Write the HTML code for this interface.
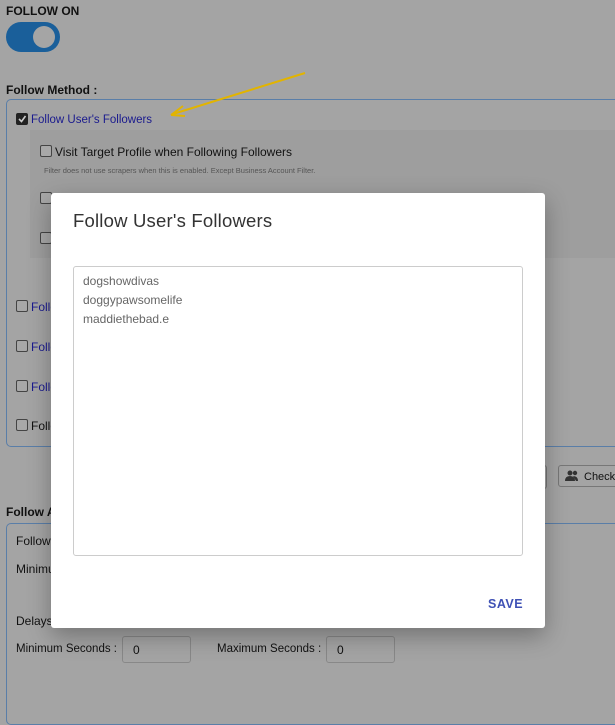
<!DOCTYPE html>
<html><head><style>
body{margin:0;width:615px;height:689px;overflow:hidden;background:#a4a4a4;font-family:"Liberation Sans",sans-serif;color:#111;position:relative}
.a{position:absolute;white-space:nowrap}
.cb{position:absolute;width:10px;height:10px;border:1px solid #444;border-radius:2px;background:#a8a8a8}
.blue{color:#1a1a8e}
.inp{position:absolute;border:1px solid #888;border-radius:3px;height:27px;font-size:12px;line-height:27px;padding-left:10px;box-sizing:border-box}
</style></head><body>
<div class="a" style="left:6px;top:4px;font-size:12px;font-weight:bold">FOLLOW ON</div>
<div class="a" style="left:6px;top:22px;width:54px;height:30px;border-radius:15px;background:#1a5f9a"></div>
<div class="a" style="left:33px;top:26px;width:22px;height:22px;border-radius:50%;background:#a5a5a5"></div>
<div class="a" style="left:6px;top:83px;font-size:12px;font-weight:bold">Follow Method :</div>
<div class="a" style="left:6px;top:99px;width:640px;height:346px;border:1px solid #5a7ea8;border-radius:5px"></div>
<svg class="a" style="left:165px;top:70px" width="145" height="50"><path d="M140 3 L8 44" stroke="#e2b400" stroke-width="2"/><path d="M6 45 L18 36 M6 45 L20 46" stroke="#e2b400" stroke-width="2"/></svg>
<div class="cb" style="left:16px;top:113px;background:#222;border-color:#222"></div>
<svg class="a" style="left:17px;top:114px" width="10" height="10"><path d="M2 5 L4.5 7.5 L8.5 2" stroke="#ccc" stroke-width="1.6" fill="none"/></svg>
<div class="a blue" style="left:31px;top:114px;font-size:11.5px">Follow User's Followers</div>
<div class="a" style="left:30px;top:130px;width:600px;height:128px;background:#9e9e9e"></div>
<div class="cb" style="left:40px;top:145px"></div>
<div class="a" style="left:55px;top:145px;font-size:12px">Visit Target Profile when Following Followers</div>
<div class="a" style="left:44px;top:166px;font-size:7.5px;color:#555">Filter does not use scrapers when this is enabled. Except Business Account Filter.</div>
<div class="cb" style="left:40px;top:192px"></div><div class="cb" style="left:40px;top:232px"></div>
<div class="cb" style="left:16px;top:300px"></div><div class="a blue" style="left:31px;top:300px;font-size:12px">Follow</div>
<div class="cb" style="left:16px;top:340px"></div><div class="a blue" style="left:31px;top:340px;font-size:12px">Follow</div>
<div class="cb" style="left:16px;top:380px"></div><div class="a blue" style="left:31px;top:380px;font-size:12px">Follow</div>
<div class="cb" style="left:16px;top:419px"></div><div class="a" style="left:31px;top:419px;font-size:12px">Follow</div>
<div class="a" style="left:520px;top:465px;width:25px;height:22px;border:1px solid #777;border-radius:3px"></div>
<div class="a" style="left:558px;top:465px;width:70px;height:22px;border:1px solid #777;border-radius:3px;font-size:11px;line-height:22px;padding-left:25px;box-sizing:border-box">Check</div>
<svg class="a" style="left:565px;top:470px" width="14" height="12"><circle cx="5" cy="3" r="2.5" fill="#333"/><path d="M0 11 Q0 6 5 6 Q10 6 10 11Z" fill="#333"/><circle cx="10" cy="3" r="2.2" fill="#333"/><path d="M8 6 Q13 6 13 11 L11 11Z" fill="#333"/></svg>
<div class="a" style="left:6px;top:505px;font-size:12px;font-weight:bold">Follow A</div>
<div class="a" style="left:6px;top:523px;width:640px;height:200px;border:1px solid #5a7ea8;border-radius:5px"></div>
<div class="a" style="left:16px;top:534px;font-size:12px">Follows</div>
<div class="a" style="left:16px;top:562px;font-size:12px">Minimu</div>
<div class="a" style="left:16px;top:614px;font-size:12px">Delays</div>
<div class="a" style="left:16px;top:643px;font-size:11.5px">Minimum Seconds :</div>
<div class="inp" style="left:122px;top:636px;width:69px">0</div>
<div class="a" style="left:217px;top:643px;font-size:11.5px">Maximum Seconds :</div>
<div class="inp" style="left:326px;top:636px;width:69px">0</div>
<div class="a" style="left:51px;top:193px;width:494px;height:435px;background:#fff;border-radius:3px;box-shadow:0 8px 24px rgba(0,0,0,.3)"></div>
<div class="a" style="left:73px;top:210px;font-size:18.5px;color:#333;letter-spacing:0.2px">Follow User's Followers</div>
<div class="a" style="left:73px;top:266px;width:450px;height:290px;border:1px solid #ccc;border-radius:3px;box-sizing:border-box"></div>
<div class="a" style="left:83px;top:272px;font-size:12px;color:#666;line-height:19px">dogshowdivas<br>doggypawsomelife<br>maddiethebad.e</div>
<div class="a" style="left:488px;top:597px;font-size:12.5px;font-weight:bold;color:#3f51b5;letter-spacing:.5px">SAVE</div>
</body></html>
